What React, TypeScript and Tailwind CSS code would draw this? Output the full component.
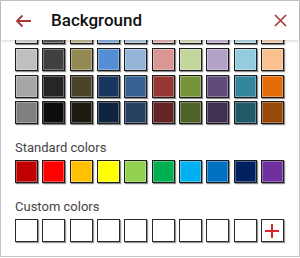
import { useLayoutEffect, useRef } from 'react';

const themeRows: string[][] = [
    ['#FFFFFF', '#000000', '#EEECE1', '#1F497D', '#4F81BD', '#C0504D', '#9BBB59', '#8064A2', '#4BACC6', '#F79646'],
    ['#F2F2F2', '#7F7F7F', '#DDD9C3', '#C6D9F0', '#DBE5F1', '#F2DCDB', '#EBF1DD', '#E5E0EC', '#DBEEF3', '#FDEADA'],
    ['#D9D9D9', '#595959', '#C4BD97', '#8DB3E2', '#B8CCE4', '#E6B9B8', '#D7E4BD', '#CCC1DA', '#B7DEE8', '#FCD5B5'],
    ['#BFBFBF', '#404040', '#948A54', '#558ED5', '#95B3D7', '#D99694', '#C3D69B', '#B3A2C7', '#93CDDD', '#FAC090'],
    ['#A6A6A6', '#262626', '#4A452A', '#17375E', '#376092', '#953735', '#77933C', '#604A7B', '#31859C', '#E46C0A'],
    ['#7F7F7F', '#0D0D0D', '#1D1B11', '#10243F', '#254061', '#632523', '#4F6228', '#403152', '#215968', '#984807'],
];

const standard = ['#C00000', '#FF0000', '#FFC000', '#FFFF00', '#92D050', '#00B050', '#00B0F0', '#0070C0', '#002060', '#7030A0'];

function Swatch({ color }: { color: string }) {
    return (
        <div
            className="h-[23px] border border-[#1c1c1c] shadow-[1px_1px_1px_rgba(0,0,0,0.45),inset_0_0_0_1px_rgba(255,255,255,0.3)]"
            style={{ backgroundColor: color }}
        />
    );
}

function Row({ colors }: { colors: string[] }) {
    return (
        <div className="grid grid-cols-10 gap-x-[4.33px]">
            {colors.map((c, i) => (
                <Swatch key={i} color={c} />
            ))}
        </div>
    );
}

export default function App() {
    const bodyRef = useRef<HTMLDivElement>(null);

    // palette is shown scrolled to the bottom
    useLayoutEffect(() => {
        const el = bodyRef.current;
        if (el) el.scrollTop = el.scrollHeight;
    }, []);

    return (
        <div
            className="w-[300px] h-[257px] border border-[#c6c6c6] bg-white flex flex-col"
            style={{ fontFamily: 'Roboto, "Liberation Sans", sans-serif' }}
        >
            {/* Header */}
            <div className="h-[39px] shrink-0 flex items-center relative z-10 bg-white shadow-[0_1px_3px_rgba(0,0,0,0.18)]">
                <svg className="ml-[14px]" width="17" height="14" viewBox="0 0 17 14" fill="none">
                    <path d="M16 7H2 M7.5 1.5L2 7L7.5 12.5" stroke="#a4373a" strokeWidth="1.8" />
                </svg>
                <span className="ml-[19px] text-[17px] font-medium text-[#111] leading-none">Background</span>
                <svg className="ml-auto mr-[12px]" width="13" height="13" viewBox="0 0 13 13" fill="none">
                    <path d="M1 1L12 12 M12 1L1 12" stroke="#a4373a" strokeWidth="1.6" />
                </svg>
            </div>

            {/* Palette */}
            <div ref={bodyRef} className="flex-1 overflow-hidden">
                <div className="pl-[14px] pr-[15px] pt-[14px] pb-[13.3px]">
                    <div className="flex flex-col gap-y-[3.67px]">
                        {themeRows.map((r, i) => (
                            <Row key={i} colors={r} />
                        ))}
                    </div>

                    <div className="mt-[15.5px] text-[13px] leading-[16px] text-[#444] mb-[4.5px]">Standard colors</div>
                    <Row colors={standard} />

                    <div className="mt-[15.5px] text-[13px] leading-[16px] text-[#444] mb-[4.5px]">Custom colors</div>
                    <div className="grid grid-cols-10 gap-x-[4.33px]">
                        {Array.from({ length: 9 }).map((_, i) => (
                            <div key={i} className="h-[23px] bg-white border border-[#2a2a2a] shadow-[1px_1px_1px_rgba(0,0,0,0.4)]" />
                        ))}
                        <div className="h-[23px] bg-white border border-[#2a2a2a] shadow-[1px_1px_1px_rgba(0,0,0,0.4)] flex items-center justify-center">
                            <svg width="14" height="14" viewBox="0 0 14 14" fill="none">
                                <path d="M7 0V14 M0 7H14" stroke="#d9252a" strokeWidth="2" />
                            </svg>
                        </div>
                    </div>
                </div>
            </div>
        </div>
    );
}
